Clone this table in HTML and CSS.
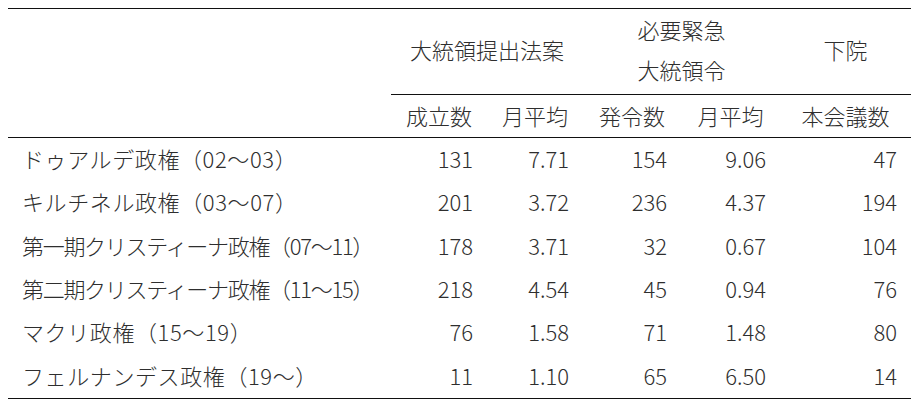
FILE: index.html
```html
<!DOCTYPE html>
<html lang="ja">
<head>
<meta charset="utf-8">
<link rel="stylesheet" href="styles.css">
</head>
<body>
<table class="stats">
  <colgroup>
    <col class="c-label">
    <col class="c-a">
    <col class="c-b">
    <col class="c-c">
    <col class="c-d">
    <col class="c-e">
  </colgroup>
  <thead>
    <tr class="h1">
      <th class="blank"></th>
      <th colspan="2" class="grp">大統領提出法案</th>
      <th colspan="2" class="grp two">必要緊急<br>大統領令</th>
      <th class="grp">下院</th>
    </tr>
    <tr class="h2">
      <th class="blank"></th>
      <th>成立数</th>
      <th>月平均</th>
      <th>発令数</th>
      <th>月平均</th>
      <th>本会議数</th>
    </tr>
  </thead>
  <tbody>
    <tr><td class="label">ドゥアルデ政権（02～03）</td><td>131</td><td>7.71</td><td>154</td><td>9.06</td><td>47</td></tr>
    <tr><td class="label">キルチネル政権（03～07）</td><td>201</td><td>3.72</td><td>236</td><td>4.37</td><td>194</td></tr>
    <tr><td class="label tight">第一期クリスティーナ政権（07～11）</td><td>178</td><td>3.71</td><td>32</td><td>0.67</td><td>104</td></tr>
    <tr><td class="label tight">第二期クリスティーナ政権（11～15）</td><td>218</td><td>4.54</td><td>45</td><td>0.94</td><td>76</td></tr>
    <tr><td class="label">マクリ政権（15～19）</td><td>76</td><td>1.58</td><td>71</td><td>1.48</td><td>80</td></tr>
    <tr><td class="label">フェルナンデス政権（19～）</td><td>11</td><td>1.10</td><td>65</td><td>6.50</td><td>14</td></tr>
  </tbody>
</table>
</body>
</html>
```

FILE: styles.css
```css
html, body {
  margin: 0;
  padding: 0;
  background: #ffffff;
}
body {
  padding: 8px;
  font-family: "Noto Sans CJK JP", "Noto Sans", sans-serif;
  color: #2e2e2e;
}
.stats {
  border-collapse: collapse;
  table-layout: fixed;
  width: 903px;
  font-size: 22px;
}
.c-label { width: 383px; }
.c-a { width: 96px; }
.c-b { width: 96px; }
.c-c { width: 98px; }
.c-d { width: 99px; }
.c-e { width: 131px; }

.stats th, .stats td {
  padding: 0;
  font-weight: 300;
  white-space: nowrap;
}
.stats thead tr.h1 th {
  border-top: 1.5px solid #111;
  height: 80px;
  padding-bottom: 5px;
  text-align: center;
  line-height: 40px;
}
.stats thead tr.h1 th.grp {
  border-bottom: 1.5px solid #111;
}
.stats thead tr.h2 th {
  height: 39px;
  padding-bottom: 3px;
  text-align: center;
  border-bottom: 1.5px solid #111;
  line-height: 26px;
}
.stats tbody td {
  height: 40.3px;
  padding-bottom: 3px;
  text-align: right;
  padding-right: 14px;
  line-height: 26px;
}
.stats tbody td.label {
  text-align: left;
  padding-left: 14px;
  padding-right: 0;
  letter-spacing: 0.6px;
}
.stats tbody td.label.tight {
  letter-spacing: -1.3px;
}
.stats tbody tr:last-child td {
  border-bottom: 1.5px solid #111;
}
```
